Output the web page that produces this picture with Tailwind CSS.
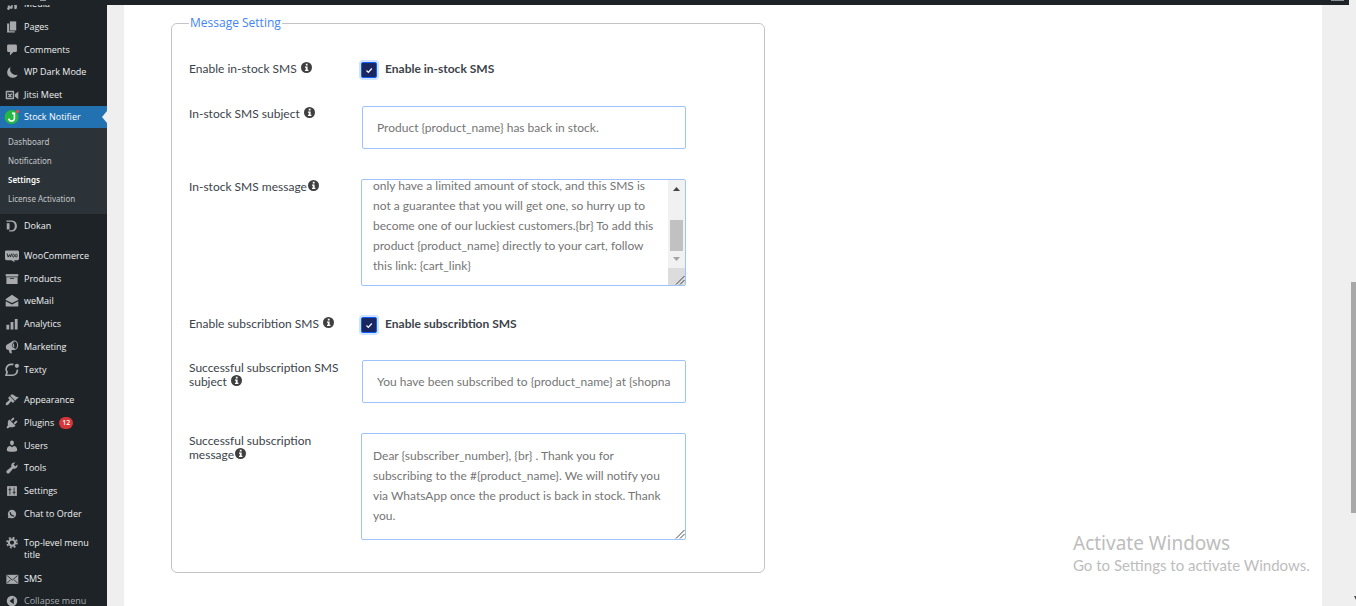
<!DOCTYPE html>
<html lang="en">
<head>
<meta charset="utf-8">
<meta name="viewport" content="width=device-width, initial-scale=1">
<title>Stock Notifier Settings</title>
<script src="https://cdn.jsdelivr.net/npm/@tailwindcss/browser@4"></script>
</head>
<body class="relative flex h-screen flex-col overflow-hidden bg-[#efefef] font-['Lato','Open_Sans',sans-serif] text-xs text-[#3c434a]">

<svg class="hidden" aria-hidden="true">
  <symbol id="info" viewBox="0 0 16 16"><circle cx="8" cy="8" r="8" fill="#3f3f3f"/><path fill="#fff" d="M7 2.6h2.6v2.5H7zM5.8 6.4h3.8v5h1.2v1.8h-5v-1.8H7V8.200H5.800z"/></symbol>
  <symbol id="grip" viewBox="0 0 10 10"><path d="M1 9.500L9.500 1M5 9.500L9.500 5" stroke="#444" stroke-width="1" fill="none"/></symbol>
</svg>

<header class="mr-[7px] flex h-[5px] shrink-0 justify-between bg-[#1d2327] pr-[5px] pl-10"><span class="h-px w-1.5 bg-[#8c9196]"></span><span class="h-px w-[13px] bg-[#8c9196]"></span></header>

<div class="flex min-h-0 flex-1">
  <nav class="w-[107px] shrink-0 overflow-hidden bg-[#1d2327] font-['Open_Sans',sans-serif] text-[9px] leading-3 font-medium text-[#f0f0f1]" aria-label="Admin menu">
    <ul class="-mt-3">
      <li><a href="#" class="flex h-[22px] items-center gap-[5px] pl-[5px]"><svg class="size-3.5 text-[#a7aaad]" viewBox="0 0 20 20" fill="currentColor"><path d="M3 3h8v7H3zM4 12h3v4.500a2 2 0 1 1-2-2H4zM13 9h4v6.500a2 2 0 1 1-2-2h-2zM9 11h2v4a2 2 0 1 1-2-2z"/></svg>Media</a></li>
      <li><a href="#" class="flex h-[23px] items-center gap-[5px] pl-[5px]"><svg class="size-3.5 text-[#a7aaad]" viewBox="0 0 20 20" fill="currentColor"><path d="M7 2h9v13H7z"/><path d="M3 5h3v11h8v2H3z"/></svg>Pages</a></li>
      <li><a href="#" class="flex h-[23px] items-center gap-[5px] pl-[5px]"><svg class="size-3.5 text-[#a7aaad]" viewBox="0 0 20 20" fill="currentColor"><path d="M5 2h10q2 0 2 2v7q0 2-2 2h-3l-5 5v-5H5q-2 0-2-2V4q0-2 2-2z"/></svg>Comments</a></li>
      <li><a href="#" class="flex h-[22px] items-center gap-[5px] pl-[5px]"><svg class="size-3.5 text-[#a7aaad]" viewBox="0 0 20 20" fill="currentColor"><path d="M8 3a8 8 0 1 0 10.500 10.500A8 8 0 0 1 8 3z"/></svg>WP Dark Mode</a></li>
      <li><a href="#" class="flex h-[23px] items-center gap-[5px] pl-[5px]"><svg class="size-3.5 text-[#a7aaad]" viewBox="0 0 20 20" fill="currentColor"><path fill-rule="evenodd" d="M2 4h10q1 0 1 1v10q0 1-1 1H2q-1 0-1-1V5q0-1 1-1zm1 2v8h8V6z"/><path d="M14 9l5-4v11l-5-4zM4 7.500l3 1.500 3-1.500v2L8 10.500l2 2.500H4l2-2.500-2-1z"/></svg>Jitsi Meet</a></li>
      <li class="bg-[#2c3338]">
        <a href="#" class="flex h-[22px] items-center bg-[#2271b1] pl-1 text-white"><svg class="mr-1 size-4" viewBox="0 0 20 20"><circle cx="9.500" cy="10" r="8.800" fill="#25b844"/><path d="M10 5.500h3v5.500a3.500 3.500 0 0 1-7 1" fill="none" stroke="#fff" stroke-width="2"/><circle cx="17" cy="3" r="2" fill="#e5484d"/></svg>Stock Notifier<svg class="ml-auto h-3 w-[5px]" viewBox="0 0 5 12"><path d="M5 0v12L0 6z" fill="#efefef"/></svg></a>
        <ul class="flex h-[86px] flex-col pt-1 font-['Noto_Sans',sans-serif] text-[8px] font-normal text-[#c3c7cb]">
          <li><a href="#" class="flex h-[19px] items-center pl-2">Dashboard</a></li>
          <li><a href="#" class="flex h-[19px] items-center pl-2">Notification</a></li>
          <li><a href="#" class="flex h-[19px] items-center pl-2 font-semibold text-white">Settings</a></li>
          <li><a href="#" class="flex h-[19px] items-center pl-2">License Activation</a></li>
        </ul>
      </li>
      <li><a href="#" class="flex h-[23px] items-center gap-[5px] pl-[5px]"><svg class="size-3.5 text-[#a7aaad]" viewBox="0 0 20 20" fill="currentColor"><path fill-rule="evenodd" d="M2 2h7c5 0 8 3 8 8s-3 8-8 8H6v-2h3c3 0 5-2 5-6s-2-6-5-6H2z"/><path d="M2.500 6h4v9h-4z"/></svg>Dokan</a></li>
    </ul>
    <ul class="mt-[7px]">
      <li><a href="#" class="flex h-[23px] items-center gap-[5px] pl-[5px]"><svg class="size-3.5 text-[#a7aaad]" viewBox="0 0 20 20" fill="currentColor"><path d="M2 2h16q2 0 2 2v10q0 2-2 2h-5l1 3-5-3H2q-2 0-2-2V4q0-2 2-2z"/><path d="M3 6.500l1.500 5L6.500 8l1.300 3.500 1.700-5M12 7.500a1.500 2 0 1 0 .1 0zM16 7.500a1.500 2 0 1 0 .1 0z" fill="none" stroke="#1d2327" stroke-width="1.300"/></svg>WooCommerce</a></li>
      <li><a href="#" class="flex h-[23px] items-center gap-[5px] pl-[5px]"><svg class="size-3.5 text-[#a7aaad]" viewBox="0 0 20 20" fill="currentColor"><path d="M1 3h18v3.500H1z"/><path fill-rule="evenodd" d="M2 7.500h16V17H2zm5 1.500v1h6V9z"/></svg>Products</a></li>
      <li><a href="#" class="flex h-[22px] items-center gap-[5px] pl-[5px]"><svg class="size-3.5 text-[#a7aaad]" viewBox="0 0 20 20" fill="currentColor"><path d="M10 1l9 6v1.500L10 13 1 8.500V7zM1 10.500l9 4.500 9-4.500V18H1z"/></svg>weMail</a></li>
      <li><a href="#" class="flex h-[23px] items-center gap-[5px] pl-[5px]"><svg class="size-3.5 text-[#a7aaad]" viewBox="0 0 20 20" fill="currentColor"><path d="M2 11h4v7H2zM8 7h4v11H8zM14 3h4v15h-4z"/></svg>Analytics</a></li>
      <li><a href="#" class="flex h-[23px] items-center gap-[5px] pl-[5px]"><svg class="size-3.5 text-[#a7aaad]" viewBox="0 0 20 20" fill="currentColor"><path d="M2 7l10-6 2 13-5 .500 1 4.500H7l-2-5H3q-3-3-1-7z"/><ellipse cx="13.500" cy="7.500" rx="4.500" ry="6" fill="none" stroke="currentColor" stroke-width="1.500"/><ellipse cx="13" cy="7.500" rx="2.500" ry="3.500" fill="none" stroke="#1d2327"/></svg>Marketing</a></li>
      <li><a href="#" class="flex h-[23px] items-center gap-[5px] pl-[5px]"><svg class="size-3.5 text-[#a7aaad]" viewBox="0 0 20 20" fill="currentColor"><path d="M12 2H9a7 7 0 0 0-6 11L1.500 17.500H10a7 7 0 0 0 7.500-8" fill="none" stroke="currentColor" stroke-width="2.400"/><circle cx="17" cy="4" r="3"/></svg>Texty</a></li>
    </ul>
    <ul class="mt-[7px]">
      <li><a href="#" class="flex h-[23px] items-center gap-[5px] pl-[5px]"><svg class="size-3.5 text-[#a7aaad]" viewBox="0 0 20 20" fill="currentColor"><path d="M14.480 11.060L7.410 3.990l1.500-1.500c.5-.56 2.300-.47 3.510.32 1.210.8 1.430 1.280 2.910 2.100 1.180.64 2.450 1.260 4.450.85zm-.71.710L6.700 4.700 4.930 6.470c-.39.39-.39 1.020 0 1.410l1.060 1.060c.39.390.39 1.030 0 1.420-.600.600-1.430 1.110-2.210 1.690-.350.260-.700.530-1.010.840C1.430 14.230.400 16.080 1.400 17.070c.990 1 2.840-.030 4.180-1.360.310-.310.580-.660.850-1.020.570-.780 1.080-1.610 1.690-2.210.390-.390 1.020-.390 1.410 0l1.060 1.060c.390.390 1.020.390 1.410 0z"/></svg>Appearance</a></li>
      <li><a href="#" class="flex h-[23px] items-center gap-[5px] pl-[5px]"><svg class="size-3.5 text-[#a7aaad]" viewBox="0 0 20 20" fill="currentColor"><path d="M13.110 4.360L9.870 7.600 8 5.730l3.240-3.240c.350-.340 1.050-.200 1.560.320.520.510.660 1.210.310 1.550zm-8 1.770l.910-1.120 9.010 9.010-1.190.840c-.710.710-2.630 1.160-3.820 1.160H6.140L4.900 17.260c-.590.590-1.540.590-2.120 0-.590-.580-.590-1.530 0-2.120l1.240-1.240v-3.880c0-1.130.400-3.190 1.090-3.890zm7.260 3.970l3.240-3.240c.340-.350 1.040-.210 1.550.310.520.510.660 1.210.310 1.550l-3.240 3.250z"/></svg>Plugins<span class="rounded-full bg-[#d63638] px-[3px] text-[7px] font-semibold text-white">12</span></a></li>
      <li><a href="#" class="flex h-[23px] items-center gap-[5px] pl-[5px]"><svg class="size-3.5 text-[#a7aaad]" viewBox="0 0 20 20" fill="currentColor"><path d="M10 9.250c-2.270 0-2.730-3.440-2.730-3.440C7 4.020 7.820 2 9.970 2c2.160 0 2.980 2.020 2.710 3.810 0 0-.410 3.440-2.680 3.440zm0 2.570L12.720 10c2.390 0 4.520 2.330 4.520 4.530v2.490s-3.650 1.130-7.240 1.130c-3.650 0-7.240-1.130-7.240-1.130v-2.490c0-2.250 1.940-4.480 4.470-4.480z"/></svg>Users</a></li>
      <li><a href="#" class="flex h-[22px] items-center gap-[5px] pl-[5px]"><svg class="size-3.5 text-[#a7aaad]" viewBox="0 0 20 20" fill="currentColor"><path d="M16.680 9.770c-1.340 1.340-3.300 1.670-4.950.99l-5.410 6.520c-.99.99-2.590.99-3.580 0s-.99-2.590 0-3.570l6.520-5.420c-.680-1.650-.350-3.610.99-4.950 1.280-1.280 3.120-1.620 4.720-1.060l-2.890 2.890 2.820 2.820 2.860-2.870c.530 1.580.180 3.390-1.080 4.650z"/></svg>Tools</a></li>
      <li><a href="#" class="flex h-[23px] items-center gap-[5px] pl-[5px]"><svg class="size-3.5 text-[#a7aaad]" viewBox="0 0 20 20" fill="currentColor"><path d="M3 3h14v14H3z"/><path d="M7 5v10M13 5v10M5 8h4M11 12h4" stroke="#1d2327" stroke-width="1.200"/></svg>Settings</a></li>
      <li><a href="#" class="flex h-[23px] items-center gap-[5px] pl-[5px]"><svg class="size-3.5 text-[#a7aaad]" viewBox="0 0 20 20" fill="currentColor"><path d="M10 4a6 6 0 1 1-3 11.200L4 16l.8-3A6 6 0 0 1 10 4z"/><path d="M7.500 7.500q0 5 5.500 5.500" fill="none" stroke="#1d2327" stroke-width="1.800"/></svg>Chat to Order</a></li>
    </ul>
    <ul class="mt-[7px]">
      <li><a href="#" class="flex h-[35px] items-start gap-[5px] pt-[5px] pl-[5px]"><svg class="size-3.5 shrink-0 text-[#a7aaad]" viewBox="0 0 20 20" fill="none" stroke="currentColor"><circle cx="10" cy="8" r="4.500" stroke-width="3"/><circle cx="10" cy="8" r="7" stroke-width="2.600" stroke-dasharray="2.750 2.748"/></svg>Top-level menu<br>title</a></li>
      <li><a href="#" class="flex h-[23px] items-center gap-[5px] pl-[5px]"><svg class="size-3.5 text-[#a7aaad]" viewBox="0 0 20 20" fill="currentColor"><path d="M2 4h17v13H2z"/><path d="M3 5l7.500 6.500L18 5M3 16l5-5M18 16l-5-5" fill="none" stroke="#1d2327" stroke-width="1.200"/></svg>SMS</a></li>
      <li><button type="button" class="flex h-[22px] items-center gap-[5px] pl-[5px] text-[#a7aaad]"><svg class="size-3.5" viewBox="0 0 20 20" fill="currentColor"><circle cx="10" cy="10" r="7.500"/><path d="M12.500 5.500v9L6.500 10z" fill="#1d2327"/></svg>Collapse menu</button></li>
    </ul>
  </nav>

  <main class="mr-[34px] ml-[17px] min-w-0 flex-1 bg-white pt-2 pl-[47px]">
    <form>
      <fieldset class="w-full max-w-[594px] rounded-md border border-[#c3c4c7] pr-[78px] pb-8 pl-[17px]">
        <legend class="px-px font-['Open_Sans',sans-serif] leading-5 text-[#4285f4]">Message Setting</legend>
        <div class="mt-[29px] grid grid-cols-[172px_minmax(0,1fr)] gap-y-[30px] leading-[14px]">

          <div class="flex h-[14px] items-start gap-1"><span>Enable in-stock SMS</span><svg class="size-[11px]"><use href="#info"/></svg></div>
          <label class="flex h-[14px] items-center gap-2 font-bold"><span class="relative mt-0.5 flex size-4"><input type="checkbox" checked class="size-4 appearance-none rounded-xs border border-[#0d5eff] bg-[#1a2660] ring-2 ring-[#cfe2ff]"><svg class="pointer-events-none absolute inset-0 size-4" viewBox="0 0 16 16"><path d="M5.500 8.500l1.800 1.800L10.800 6.500" fill="none" stroke="#fff" stroke-width="1.200"/></svg></span>Enable in-stock SMS</label>

          <label for="in-subject" class="pt-px"><span class="flex items-start gap-1">In-stock SMS subject<svg class="size-[11px]"><use href="#info"/></svg></span></label>
          <input id="in-subject" type="text" placeholder="Product {product_name} has back in stock." class="ml-px h-[43px] rounded-xs border border-[#9cc3ff] px-3.5 placeholder:text-[#757575]">

          <label for="in-message" class="flex items-start gap-px pt-px">In-stock SMS message<svg class="size-[11px]"><use href="#info"/></svg></label>
          <div class="relative flex">
            <textarea id="in-message" class="h-[107px] w-full resize-none overflow-hidden rounded-xs border border-[#9cc3ff] pt-3 pr-[26px] pb-[9px] pl-[11px] leading-5 whitespace-pre text-[#757575]">The product {product_name} is now back in stock. We
only have a limited amount of stock, and this SMS is
not a guarantee that you will get one, so hurry up to
become one of our luckiest customers.{br} To add this
product {product_name} directly to your cart, follow
this link: {cart_link}</textarea>
            <div class="absolute inset-y-px right-px flex w-[17px] flex-col bg-[#f1f1f1]" aria-hidden="true">
              <svg class="h-[17px] w-full" viewBox="0 0 17 17"><path d="M5 11h7L8.500 7z" fill="#444"/></svg>
              <span class="mx-0.5 mt-[23px] h-[31px] bg-[#c1c1c1]"></span>
              <svg class="h-[17px] w-full" viewBox="0 0 17 17"><path d="M5 6h7l-3.500 4z" fill="#a3a3a3"/></svg>
              <span class="flex flex-1 items-end justify-end bg-[#dcdcdc]"><svg class="size-2.5"><use href="#grip"/></svg></span>
            </div>
          </div>

          <div class="flex h-[14px] items-start gap-1 pt-px"><span>Enable subscribtion SMS</span><svg class="size-[11px]"><use href="#info"/></svg></div>
          <label class="flex h-[14px] items-center gap-2 pt-0.5 font-bold"><span class="relative mt-0.5 flex size-4"><input type="checkbox" checked class="size-4 appearance-none rounded-xs border border-[#0d5eff] bg-[#1a2660] ring-2 ring-[#cfe2ff]"><svg class="pointer-events-none absolute inset-0 size-4" viewBox="0 0 16 16"><path d="M5.500 8.500l1.800 1.800L10.800 6.500" fill="none" stroke="#fff" stroke-width="1.200"/></svg></span>Enable subscribtion SMS</label>

          <label for="sub-subject" class="pt-px">Successful subscription SMS<span class="flex items-start gap-1">subject<svg class="size-[11px]"><use href="#info"/></svg></span></label>
          <input id="sub-subject" type="text" placeholder="You have been subscribed to {product_name} at {shopname}" class="ml-px h-[43px] rounded-xs border border-[#9cc3ff] px-3.5 placeholder:text-[#757575]">

          <label for="sub-message" class="pt-px">Successful subscription<span class="flex items-start gap-px">message<svg class="size-[11px]"><use href="#info"/></svg></span></label>
          <div class="relative flex">
            <textarea id="sub-message" class="h-[107px] w-full resize-none overflow-hidden rounded-xs border border-[#9cc3ff] px-[11px] py-3 leading-5 text-[#757575]">Dear {subscriber_number}, {br} . Thank you for
subscribing to the #{product_name}. We will notify you
via WhatsApp once the product is back in stock. Thank
you.</textarea>
            <svg class="absolute right-px bottom-px size-2.5" aria-hidden="true"><use href="#grip"/></svg>
          </div>
        </div>
      </fieldset>
    </form>
  </main>
</div>

<div class="absolute right-0 bottom-[93px] h-[231px] w-[5px] bg-[#a8a8a8]" aria-hidden="true"></div>
<svg class="absolute right-0 bottom-1.5 h-1 w-0.5" viewBox="0 0 2 4" aria-hidden="true"><path d="M0 0h2v4z" fill="#444"/></svg>
<aside class="pointer-events-none absolute right-[47px] bottom-[31px] w-[236px] whitespace-nowrap text-[#bdbdbd]">
  <p class="font-['Noto_Sans',sans-serif] text-[19px] leading-6">Activate Windows</p>
  <p class="text-[15px] leading-5">Go to Settings to activate Windows.</p>
</aside>
<script>
  const message = document.getElementById('in-message');
  message.scrollTop = message.scrollHeight;
</script>
</body>
</html>
